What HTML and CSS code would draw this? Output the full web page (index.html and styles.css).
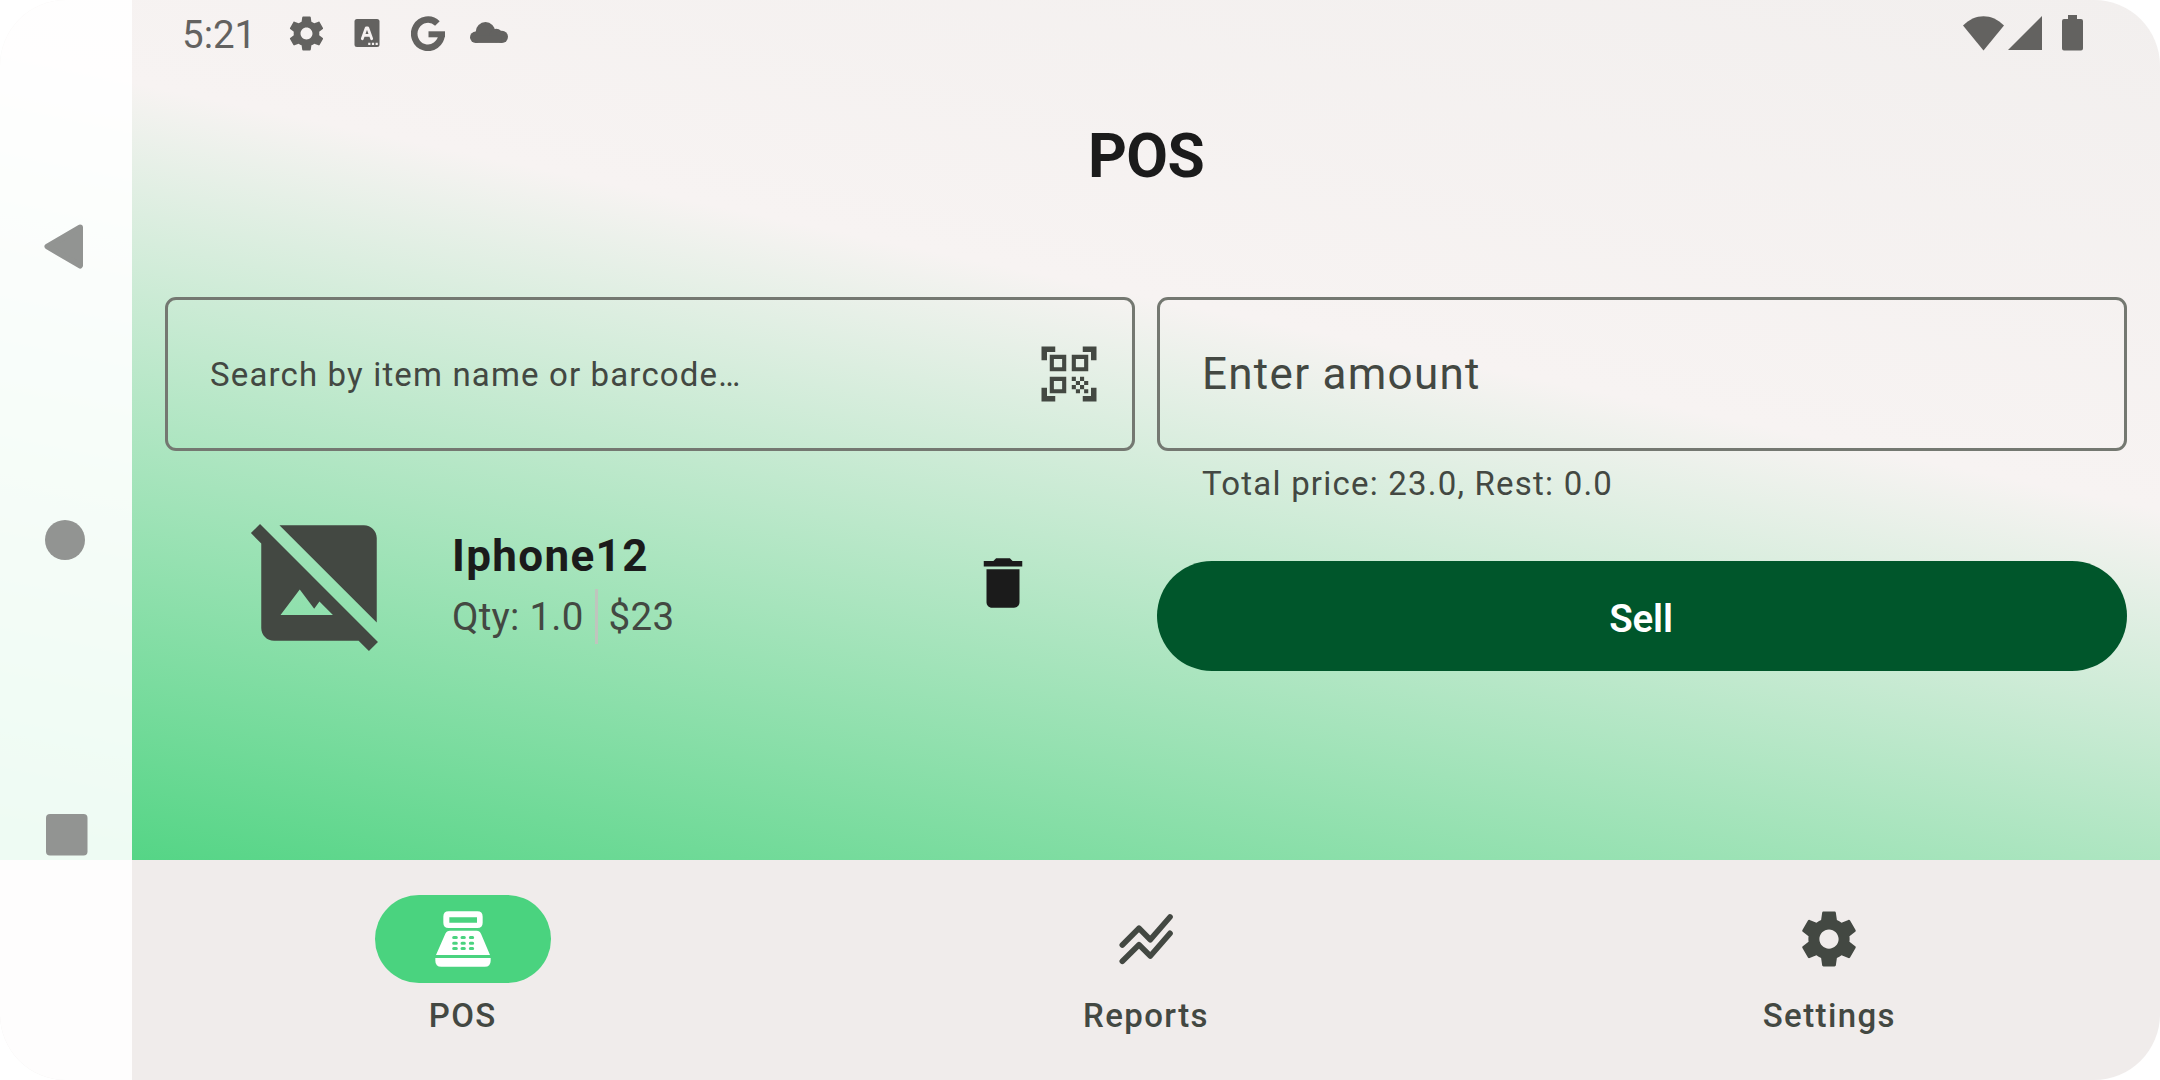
FILE: index.html
```html
<!DOCTYPE html>
<html lang="en">
<head>
<meta charset="utf-8">
<title>POS</title>
<link rel="stylesheet" href="styles.css">
</head>
<body>
<div class="device">
  <nav class="rail">
    <svg class="rail-icon" viewBox="0 0 44 48"><path d="M37 5 4.500 24l32.500 19z" class="rail-back"/></svg>
    <svg class="rail-icon" viewBox="0 0 44 48"><circle cx="21" cy="24" r="20"/></svg>
    <svg class="rail-icon" viewBox="0 0 44 48"><rect x="2" y="4" width="41.5" height="41.5" rx="4"/></svg>
  </nav>
  <div class="app">
    <header class="status">
      <span class="clock">5:21</span>
      <svg class="st-gear" viewBox="0 0 24 24"><path d="M19.43 12.98c.04-.32.07-.64.07-.98s-.03-.66-.07-.98l2.11-1.65c.19-.15.24-.42.12-.64l-2-3.46c-.12-.22-.39-.3-.61-.22l-2.49 1c-.52-.4-1.08-.73-1.69-.98l-.38-2.65C14.46 2.18 14.25 2 14 2h-4c-.25 0-.46.18-.49.42l-.38 2.65c-.61.25-1.17.59-1.69.98l-2.49-1c-.23-.09-.49 0-.61.22l-2 3.46c-.13.22-.07.49.12.64l2.11 1.65c-.04.32-.07.65-.07.98s.03.66.07.98l-2.11 1.65c-.19.15-.24.42-.12.64l2 3.46c.12.22.39.3.61.22l2.49-1c.52.4 1.08.73 1.69.98l.38 2.65c.03.24.24.42.49.42h4c.25 0 .46-.18.49-.42l.38-2.65c.61-.25 1.17-.59 1.69-.98l2.49 1c.23.09.49 0 .61-.22l2-3.46c.12-.22.07-.49-.12-.64l-2.11-1.65zM12 15.5c-1.93 0-3.5-1.57-3.5-3.5s1.57-3.5 3.5-3.5 3.5 1.57 3.5 3.5-1.57 3.5-3.5 3.5z"/></svg>
      <svg class="st-lang" viewBox="0 0 26 28"><rect x=".5" width="25" height="28" rx="2.5"/><path class="st-a" d="M8.300 19.700 12.200 9h1.600l3.900 10.700M9.800 16.300h6.400"/><path class="st-dots" d="M14.200 24.800h2.200M17.900 24.800h2.200M21.600 24.800h2.200"/></svg>
      <svg class="st-g" viewBox="0 0 34 35"><path d="M26.400 7.500A13.700 14.100 0 1 0 30.600 18.500"/><path class="st-g-bar" d="M17.500 18.300H34"/></svg>
      <svg class="st-cloud" viewBox="0 0 113 62"><circle cx="17" cy="45" r="17"/><circle cx="46" cy="29" r="29"/><circle cx="78" cy="40" r="20"/><circle cx="95" cy="44" r="18"/><path d="M17 40h78v22H17z"/></svg>
      <span class="spacer"></span>
      <svg class="st-wifi" viewBox="0 0 41 35"><path d="M0 9.500C12-3 29-3 41 9.500L20.500 34.500z"/></svg>
      <svg class="st-signal" viewBox="0 0 34 34"><path d="M34 0v34H0z"/></svg>
      <svg class="st-battery" viewBox="0 0 21 36"><path d="M6 0h9v4h4a2 2 0 0 1 2 2v27.500a2 2 0 0 1-2 2H2a2 2 0 0 1-2-2V6a2 2 0 0 1 2-2h4z"/></svg>
    </header>
    <h1 class="title">POS</h1>
    <main class="content">
      <section class="column">
        <div class="field field-search">
          <span class="small">Search by item name or barcode…</span>
          <svg class="icon" viewBox="0 0 24 24"><path d="M9.500 6.500v3h-3v-3h3M11 5H5v6h6V5zm-1.500 9.500v3h-3v-3h3M11 13H5v6h6v-6zm6.500-6.500v3h-3v-3h3M19 5h-6v6h6V5zm-6 8h1.500v1.500H13V13zm1.500 1.500H16V16h-1.500v-1.500zM16 13h1.500v1.500H16V13zm-3 3h1.500v1.500H13V16zm1.500 1.500H16V19h-1.500v-1.500zM16 16h1.500v1.500H16V16zm1.500-1.500H19V16h-1.500v-1.500zm0 3H19V19h-1.500v-1.500zM22 7h-2V4h-3V2h5v5zm0 15v-5h-2v3h-3v2h5zM2 22h5v-2H4v-3H2v5zM2 2v5h2V4h3V2H2z"/></svg>
        </div>
        <article class="item">
          <svg class="thumb" viewBox="0 0 24 24"><path d="M21 5c0-1.100-.9-2-2-2H5.830L21 18.170V5zM2.810 2.810 1.390 4.220 3 5.830V19c0 1.100.9 2 2 2h13.170l1.610 1.610 1.410-1.410L2.810 2.810zM6 17l3-4 2.250 3 .82-1.100 2.100 2.100H6z"/></svg>
          <div class="item-text">
            <div class="item-name">Iphone12</div>
            <div class="item-meta"><span>Qty: 1.0</span><i class="divider"></i><span>$23</span></div>
          </div>
          <svg class="icon trash" viewBox="0 0 24 24"><path d="M6 19c0 1.100.9 2 2 2h8c1.100 0 2-.9 2-2V7H6v12zM19 4h-3.500l-1-1h-5l-1 1H5v2h14V4z"/></svg>
        </article>
      </section>
      <section class="column">
        <div class="field"><span class="large">Enter amount</span></div>
        <div class="support small">Total price: 23.0, Rest: 0.0</div>
        <button class="sell">Sell</button>
      </section>
    </main>
    <nav class="tabs">
      <a class="tab">
        <span class="pill active"><svg class="icon" viewBox="0 0 198 198"><path fill-rule="evenodd" d="M56 16h86q16 0 16 16v18q0 16-16 16H56q-16 0-16-16V32q0-16 16-16zM58 34v16h83V34z"/><path fill-rule="evenodd" d="M60 74h80q9 0 13 9l27 64H18l28-64q4-9 14-9zM71 90a4.500 4.500 0 0 0 0 9h8a4.500 4.500 0 0 0 0-9zm25 0a4.500 4.500 0 0 0 0 9h7a4.500 4.500 0 0 0 0-9zm25 0a4.500 4.500 0 0 0 0 9h7a4.500 4.500 0 0 0 0-9zM71 107a4.500 4.500 0 0 0 0 9h8a4.500 4.500 0 0 0 0-9zm25 0a4.500 4.500 0 0 0 0 9h7a4.500 4.500 0 0 0 0-9zm25 0a4.500 4.500 0 0 0 0 9h7a4.500 4.500 0 0 0 0-9zM71 123a4.500 4.500 0 0 0 0 9h8a4.500 4.500 0 0 0 0-9zm25 0a4.500 4.500 0 0 0 0 9h7a4.500 4.500 0 0 0 0-9zm25 0a4.500 4.500 0 0 0 0 9h7a4.500 4.500 0 0 0 0-9z"/><path d="M16 156h166v8q0 18-18 18H34q-18 0-18-18z"/></svg></span>
        <span class="tab-label">POS</span>
      </a>
      <a class="tab">
        <span class="pill"><svg class="icon" viewBox="0 0 198 198"><path class="chart" d="m28 117 50-50 34 34 59-68M28 166l50-50 34 34 59-68"/></svg></span>
        <span class="tab-label">Reports</span>
      </a>
      <a class="tab">
        <span class="pill"><svg class="icon" viewBox="0 0 24 24"><path d="M19.430 12.980c.04-.32.07-.64.07-.98s-.03-.66-.07-.98l2.110-1.650c.19-.15.24-.42.12-.64l-2-3.460c-.12-.22-.39-.3-.61-.22l-2.490 1c-.52-.4-1.080-.73-1.690-.98l-.38-2.650C14.460 2.180 14.250 2 14 2h-4c-.25 0-.46.18-.49.42l-.38 2.650c-.61.25-1.170.59-1.690.98l-2.490-1c-.23-.09-.49 0-.61.22l-2 3.460c-.13.22-.07.49.12.64l2.110 1.650c-.04.32-.07.65-.07.98s.03.66.07.98l-2.110 1.650c-.19.15-.24.42-.12.64l2 3.460c.12.22.39.3.61.22l2.490-1c.52.4 1.080.73 1.690.98l.38 2.650c.03.24.24.42.49.42h4c.25 0 .46-.18.49-.42l.38-2.650c.61-.25 1.170-.59 1.690-.98l2.490 1c.23.09.49 0 .61-.22l2-3.460c.12-.22.07-.49-.12-.64l-2.110-1.650zM12 15.500c-1.930 0-3.500-1.570-3.500-3.500s1.570-3.500 3.500-3.500 3.500 1.570 3.500 3.500-1.570 3.500-3.500 3.500z"/></svg></span>
        <span class="tab-label">Settings</span>
      </a>
    </nav>
  </div>
</div>
</body>
</html>
```
FILE: styles.css
```css
* { box-sizing: border-box; }
body {
  margin: 0;
  background: #fff;
  font-family: Roboto, "Liberation Sans", sans-serif;
  color: #434842;
}
svg { display: block; flex: none; fill: currentColor; }
.device {
  display: flex;
  width: 2160px;
  height: 1080px;
  border-radius: 66px;
  overflow: hidden;
  background: linear-gradient(11.9deg, #4fd482 0, #f7f3f2 788px, #f2efee 100%) no-repeat 0 0 / 100% 860px #f0eceb;
}
.rail {
  width: 132px;
  flex: none;
  background: rgba(255, 255, 255, 0.9);
  color: #929492;
  display: flex;
  flex-direction: column;
  padding: 222px 0 0 44px;
  gap: 246px;
}
.rail-icon { width: 44px; height: 48px; }
.rail-back { stroke: currentColor; stroke-width: 6px; stroke-linejoin: round; transform: translate(-1px, 0.5px); }
.app { flex: 1; display: flex; flex-direction: column; }

.status {
  height: 66px;
  display: flex;
  align-items: center;
  padding: 0 77px 0 50px;
  color: #636260;
}
.clock { font-size: 38.5px; line-height: 45px; width: 104px; padding: 3px 0 0; }
.spacer { flex: 1; }
.st-gear { width: 41px; height: 41px; }
.st-lang { width: 26px; height: 28px; margin-left: 27px; }
.st-a { fill: none; stroke: #f6f2f1; stroke-width: 2.8px; stroke-linecap: round; stroke-linejoin: round; }
.st-dots { stroke: #f6f2f1; stroke-width: 2.2px; }
.st-g { width: 34px; height: 35px; margin-left: 31px; }
.st-g path { fill: none; stroke: currentColor; stroke-width: 6.6px; }
.st-g .st-g-bar { stroke-width: 6px; }
.st-cloud { width: 38px; height: 21px; margin: 0 0 2px 25px; }
.st-wifi { width: 41px; height: 35px; margin-right: 3.5px; }
.st-signal { width: 34px; height: 34px; margin-right: 20.5px; }
.st-battery { width: 21px; height: 36px; }

.title {
  margin: 0;
  height: 176px;
  padding-top: 3px;
  line-height: 176px;
  text-align: center;
  font-size: 60.5px;
  font-weight: 700;
  letter-spacing: -0.6px;
  color: #1b1b1b;
}
.content {
  height: 618px;
  display: grid;
  grid-template-columns: 1fr 1fr;
  gap: 22px;
  padding: 55px 33px 0;
}
.column { display: flex; flex-direction: column; }
.field {
  height: 154px;
  border: 3px solid #747871;
  border-radius: 11px;
  padding: 0 30px 0 42px;
  display: flex;
  align-items: center;
  justify-content: space-between;
}
.icon { width: 66px; height: 66px; }
.small { font-size: 33px; line-height: 44px; letter-spacing: 1.15px; }
.field .small { padding-top: 2px; }
.large { font-size: 44px; line-height: 66px; letter-spacing: 1.28px; }
.support { padding: 11px 45px 0; letter-spacing: 1.21px; }
.sell {
  margin-top: 55px;
  height: 110px;
  border: 0;
  border-radius: 55px;
  background: #00562b;
  color: #fff;
  font: 600 38.5px/55px Roboto, "Liberation Sans", sans-serif;
  letter-spacing: -0.2px;
  padding: 5px 2px 0 0;
}
.item {
  height: 154px;
  margin-top: 55px;
  padding: 0 99px 0 77px;
  display: flex;
  align-items: center;
}
.thumb { width: 154px; height: 154px; }
.item-text { flex: 1; padding-left: 56px; }
.item-name { font-size: 44px; line-height: 66px; font-weight: 700; letter-spacing: 1.35px; color: #1b1b1b; }
.item-meta { display: flex; align-items: center; font-size: 38.5px; line-height: 55px; letter-spacing: 0.25px; }
.divider { width: 3px; height: 55px; margin: 0 11px; background: #bfc5bd; }
.trash { color: #1b1b1b; }

.tabs {
  height: 220px;
  display: grid;
  grid-template-columns: repeat(3, 1fr);
  gap: 22px;
  padding-top: 35px;
}
.tab { display: flex; flex-direction: column; align-items: center; }
.pill {
  width: 176px;
  height: 88px;
  border-radius: 44px;
  display: flex;
  align-items: center;
  justify-content: center;
}
.active { background: #4ad37f; color: #fff; }
.chart { fill: none; stroke: currentColor; stroke-width: 17px; stroke-linecap: round; stroke-linejoin: round; }
.tab-label { margin-top: 11px; font-size: 33px; line-height: 44px; font-weight: 500; letter-spacing: 1.375px; }
```
